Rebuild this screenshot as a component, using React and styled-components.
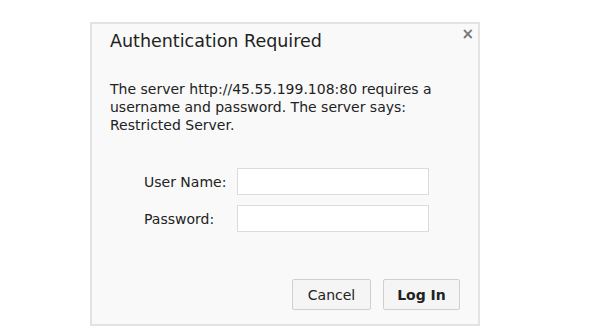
import styled, { createGlobalStyle } from 'styled-components';

const GlobalStyle = createGlobalStyle`
  html, body {
    margin: 0;
    padding: 0;
    background: #ffffff;
    font-family: "DejaVu Sans", sans-serif;
  }
`;

const Page = styled.div`
  display: flex;
  padding: 22px 0 0 90px;
`;

const Dialog = styled.div`
  position: relative;
  box-sizing: border-box;
  width: 390px;
  height: 304px;
  background: #f9f9f9;
  border: 2px solid #e3e3e3;
  padding: 6px 18px 14px 18px;
  display: flex;
  flex-direction: column;
  color: #333;
`;

const Title = styled.h1`
  margin: 0;
  font-size: 17.5px;
  font-weight: normal;
  line-height: 22px;
  color: #222;
`;

const Close = styled.button`
  position: absolute;
  top: 1px;
  right: 4px;
  border: none;
  background: none;
  padding: 0;
  font-size: 15px;
  font-weight: bold;
  color: #777;
  font-family: "DejaVu Sans", sans-serif;
`;

const Message = styled.p`
  margin: 28px 0 0 0;
  font-size: 14px;
  line-height: 18px;
  color: #222;
`;

const Form = styled.div`
  display: grid;
  grid-template-columns: 93px 192px;
  row-gap: 10px;
  align-items: center;
  margin: 34px 0 0 34px;
`;

const Label = styled.label`
  font-size: 14px;
  color: #222;
`;

const Input = styled.input`
  box-sizing: border-box;
  width: 192px;
  height: 27px;
  border: 1px solid #dcdcdc;
  background: #fff;
`;

const Actions = styled.div`
  margin-top: auto;
  display: flex;
  justify-content: flex-end;
  gap: 12px;
`;

const Button = styled.button`
  box-sizing: border-box;
  height: 31px;
  padding: 0 12px;
  min-width: ${p => p.$wide ? '77px' : '79px'};
  border: 1px solid #cfcfcf;
  border-radius: 2px;
  background: #f5f5f5;
  font-family: "DejaVu Sans", sans-serif;
  font-size: 14px;
  font-weight: ${p => p.$primary ? 'bold' : 'normal'};
  color: #222;
`;

export default function App() {
  return (
    <>
      <GlobalStyle />
      <Page>
        <Dialog>
          <Close>×</Close>
          <Title>Authentication Required</Title>
          <Message>
            The server http://45.55.199.108:80 requires a username and password. The server says: Restricted Server.
          </Message>
          <Form>
            <Label>User Name:</Label>
            <Input type="text" />
            <Label>Password:</Label>
            <Input type="password" />
          </Form>
          <Actions>
            <Button>Cancel</Button>
            <Button $primary $wide>Log In</Button>
          </Actions>
        </Dialog>
      </Page>
    </>
  );
}
